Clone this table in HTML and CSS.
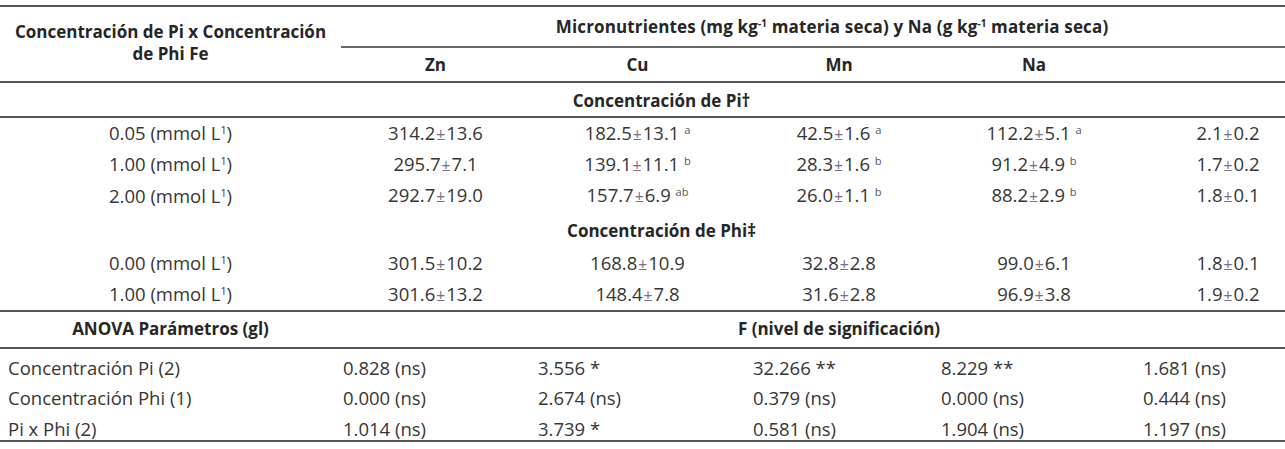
FILE: index.html
```html
<!DOCTYPE html>
<html lang="es">
<head>
<meta charset="utf-8">
<title>Micronutrientes</title>
<link rel="stylesheet" href="styles.css">
</head>
<body>
<div class="page">
<table class="data">
  <colgroup>
    <col class="c-label"><col class="c-zn"><col class="c-cu"><col class="c-mn"><col class="c-na"><col class="c-fe">
  </colgroup>
  <thead>
    <tr class="h1">
      <th rowspan="2" class="corner">Concentración de Pi x Concentración<br>de Phi Fe</th>
      <th colspan="5" class="group"><span class="shift-group">Micronutrientes (mg kg<sup class="exp">-1</sup> materia seca) y Na (g kg<sup class="exp">-1</sup> materia seca)</span></th>
    </tr>
    <tr class="h2">
      <th class="zn">Zn</th><th>Cu</th><th>Mn</th><th>Na</th><th></th>
    </tr>
  </thead>
  <tbody>
    <tr class="section"><th colspan="6">Concentración de Pi†</th></tr>
    <tr class="row">
      <td>0.05 (mmol L<sup class="exp">1</sup>)</td>
      <td class="zn">314.2<span class="pm">±</span>13.6</td>
      <td>182.5<span class="pm">±</span>13.1 <sup class="let">a</sup></td>
      <td>42.5<span class="pm">±</span>1.6 <sup class="let">a</sup></td>
      <td>112.2<span class="pm">±</span>5.1 <sup class="let">a</sup></td>
      <td class="fe">2.1<span class="pm">±</span>0.2</td>
    </tr>
    <tr class="row">
      <td>1.00 (mmol L<sup class="exp">1</sup>)</td>
      <td class="zn">295.7<span class="pm">±</span>7.1</td>
      <td>139.1<span class="pm">±</span>11.1 <sup class="let">b</sup></td>
      <td>28.3<span class="pm">±</span>1.6 <sup class="let">b</sup></td>
      <td>91.2<span class="pm">±</span>4.9 <sup class="let">b</sup></td>
      <td class="fe">1.7<span class="pm">±</span>0.2</td>
    </tr>
    <tr class="row">
      <td>2.00 (mmol L<sup class="exp">1</sup>)</td>
      <td class="zn">292.7<span class="pm">±</span>19.0</td>
      <td>157.7<span class="pm">±</span>6.9 <sup class="let">ab</sup></td>
      <td>26.0<span class="pm">±</span>1.1 <sup class="let">b</sup></td>
      <td>88.2<span class="pm">±</span>2.9 <sup class="let">b</sup></td>
      <td class="fe">1.8<span class="pm">±</span>0.1</td>
    </tr>
    <tr class="section2"><th colspan="6">Concentración de Phi‡</th></tr>
    <tr class="row">
      <td>0.00 (mmol L<sup class="exp">1</sup>)</td>
      <td class="zn">301.5<span class="pm">±</span>10.2</td>
      <td>168.8<span class="pm">±</span>10.9</td>
      <td>32.8<span class="pm">±</span>2.8</td>
      <td>99.0<span class="pm">±</span>6.1</td>
      <td class="fe">1.8<span class="pm">±</span>0.1</td>
    </tr>
    <tr class="row last">
      <td>1.00 (mmol L<sup class="exp">1</sup>)</td>
      <td class="zn">301.6<span class="pm">±</span>13.2</td>
      <td>148.4<span class="pm">±</span>7.8</td>
      <td>31.6<span class="pm">±</span>2.8</td>
      <td>96.9<span class="pm">±</span>3.8</td>
      <td class="fe">1.9<span class="pm">±</span>0.2</td>
    </tr>
  </tbody>
  <tbody class="anova">
    <tr class="anova-head">
      <th>ANOVA Parámetros (gl)</th>
      <th colspan="5"><span class="shift-f">F (nivel de significación)</span></th>
    </tr>
    <tr class="f-row">
      <td>Concentración Pi (2)</td>
      <td class="f-zn">0.828 (ns)</td>
      <td>3.556 *</td>
      <td>32.266 **</td>
      <td>8.229 **</td>
      <td>1.681 (ns)</td>
    </tr>
    <tr class="f-row">
      <td>Concentración Phi (1)</td>
      <td class="f-zn">0.000 (ns)</td>
      <td>2.674 (ns)</td>
      <td>0.379 (ns)</td>
      <td>0.000 (ns)</td>
      <td>0.444 (ns)</td>
    </tr>
    <tr class="f-row">
      <td>Pi x Phi (2)</td>
      <td class="f-zn">1.014 (ns)</td>
      <td>3.739 *</td>
      <td>0.581 (ns)</td>
      <td>1.904 (ns)</td>
      <td>1.197 (ns)</td>
    </tr>
  </tbody>
</table>
</div>
</body>
</html>
```

FILE: styles.css
```css
* { box-sizing: border-box; }

body {
  margin: 0;
  background: #ffffff;
  font-family: "Open Sans", "Noto Sans", sans-serif;
  color: #363636;
}

.page {
  padding-top: 5px;
}

.data {
  width: 1285px;
  border-collapse: collapse;
  table-layout: fixed;
  font-size: 17px;
  line-height: 22px;
}

.c-label { width: 341px; }
.c-zn { width: 189px; }
.c-cu { width: 215px; }
.c-mn { width: 188px; }
.c-na { width: 202px; }
.c-fe { width: 150px; }

th, td {
  padding: 0;
  text-align: center;
  vertical-align: middle;
  white-space: nowrap;
}

td {
  font-size: 18.5px;
}

th {
  font-weight: 700;
  color: #262626;
}

.h1 {
  border-top: 2px solid #555555;
  height: 41px;
}

.h1 .group {
  border-bottom: 2px solid #666666;
  letter-spacing: 0.15px;
}

.h1 .corner {
  border-bottom: 2px solid #555555;
  padding-bottom: 2px;
}

.shift-group {
  display: inline-block;
  padding-left: 38px;
}

.shift-f {
  display: inline-block;
  padding-left: 52px;
}

.h2 {
  height: 35px;
  border-bottom: 2px solid #555555;
}

.section {
  height: 35px;
  border-bottom: 2px solid #555555;
}

.section th {
  padding-top: 3px;
  padding-left: 38px;
}

.section2 {
  height: 36px;
}

.section2 th {
  padding-top: 2px;
  padding-left: 38px;
}

.row {
  height: 31.5px;
}

.row .fe {
  padding-left: 36px;
}

.row.last {
  border-bottom: 2px solid #555555;
}

.pm {
  font-size: 0.85em;
  color: #7a6c84;
  padding: 0 1px;
}

sup {
  line-height: 0;
}

.exp {
  font-size: 0.58em;
  vertical-align: 0.6em;
}

.let {
  font-size: 0.6em;
  vertical-align: 0.55em;
  color: #555555;
}

.anova-head {
  height: 37px;
  border-bottom: 2px solid #555555;
}

.f-row {
  height: 31.3px;
}

.f-row td {
  text-align: left;
  padding-left: 8px;
  padding-top: 8px;
}

.f-row td.f-zn {
  padding-left: 2px;
}

.f-row:last-child {
  border-bottom: 2px solid #555555;
}
```
